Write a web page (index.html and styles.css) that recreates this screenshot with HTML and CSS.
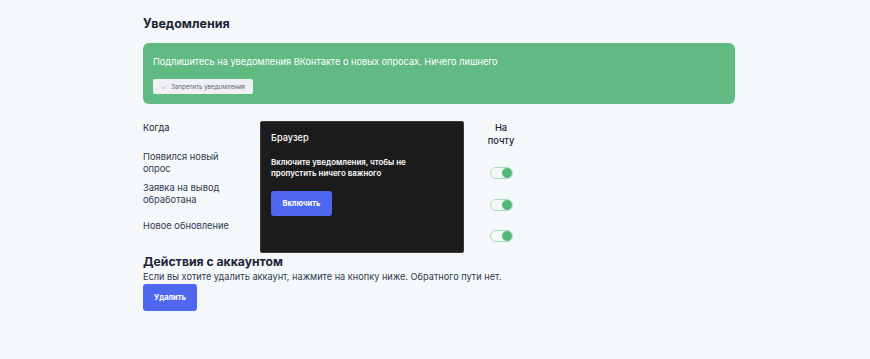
FILE: index.html
```html
<!DOCTYPE html>
<html lang="ru">
    <head>
        <meta charset="UTF-8">
        <meta name="viewport" content="width=device-width, initial-scale=1.0">
        <title>Уведомления</title>
        <link rel="stylesheet" href="styles.css">
    </head>
    <body>
        <div class="page">
            <h2 class="section-title">Уведомления</h2>
            <div class="vk-banner">
                <p>Подлишитесь на уведомления ВКонтакте о новых опросах. Ничего лишнего</p>
                <button class="vk-button">
                    <svg width="8" height="6" viewBox="0 0 8 6"><path d="M1 3.2 L3 5 L7 1" fill="none" stroke="#9aa3ad" stroke-width="1"/></svg>
                    Запретить уведомления
                </button>
            </div>

            <div class="notify-table">
                <div class="row head">
                    <div class="label">Когда</div>
                    <div class="browser-col"></div>
                    <div class="mail-col">На<br>почту</div>
                </div>
                <div class="row r1">
                    <div class="label">Появился новый<br>опрос</div>
                    <div class="browser-col"></div>
                    <div class="mail-col"><span class="toggle on"></span></div>
                </div>
                <div class="row r2">
                    <div class="label">Заявка на вывод<br>обработана</div>
                    <div class="browser-col"></div>
                    <div class="mail-col"><span class="toggle on"></span></div>
                </div>
                <div class="row r3">
                    <div class="label">Новое обновление</div>
                    <div class="browser-col"></div>
                    <div class="mail-col"><span class="toggle on"></span></div>
                </div>

                <div class="browser-popup">
                    <div class="popup-title">Браузер</div>
                    <div class="popup-text">Включите уведомления, чтобы не<br>пропустить ничего важного</div>
                    <button class="btn">Включить</button>
                </div>
            </div>

            <h2 class="section-title account">Действия с аккаунтом</h2>
            <p class="account-text">Если вы хотите удалить аккаунт, нажмите на кнопку ниже. Обратного пути нет.</p>
            <button class="btn delete">Удалить</button>
        </div>
    </body>
</html>
```

FILE: styles.css
```css
body {
    font-family: Inter, "Noto Sans", sans-serif;
    background-color: #f5f8fb;
    color: #1c2536;
    margin: 0;
    padding: 0;
}

.page {
    width: 592px;
    margin-left: 143px;
    padding-top: 16px;
}

.section-title {
    font-size: 12.5px;
    font-weight: 700;
    margin: 0;
    line-height: 16px;
}

.vk-banner {
    box-sizing: border-box;
    margin-top: 11px;
    background-color: #61ba82;
    border-radius: 6px;
    padding: 12px 10px 0;
    height: 61px;
}

.vk-banner p {
    margin: 0;
    color: #fff;
    font-size: 9.2px;
    line-height: 13px;
}

.vk-button {
    margin-top: 11px;
    height: 15px;
    width: 100px;
    border: none;
    border-radius: 2px;
    background-color: #eef0f3;
    color: #5d6470;
    font-family: inherit;
    font-size: 6.2px;
    white-space: nowrap;
    display: flex;
    align-items: center;
    gap: 4px;
    padding: 0 8px;
}

.notify-table {
    position: relative;
    margin-top: 16px;
}

.row {
    display: grid;
    grid-template-columns: 117px 210px 62px;
    font-size: 9.3px;
    line-height: 12px;
    color: #2e3a4f;
}

.row.head {
    height: 30px;
    line-height: 13px;
    padding-top: 1px;
}

.row.head .label {
    color: #1c2536;
}

.row.head .mail-col {
    text-align: center;
    font-weight: 500;
    color: #1c2536;
}

.row.r1 { height: 31px; }
.row.r1 .mail-col { padding-top: 16px; }
.row.r2 { height: 31px; }
.row.r2 .mail-col { padding-top: 17px; }
.row.r3 { height: 30px; }
.row.r3 .label { padding-top: 7px; }
.row.r3 .mail-col { padding-top: 17px; }

.mail-col {
    display: flex;
    justify-content: center;
    align-items: flex-start;
}

.toggle {
    position: relative;
    display: block;
    width: 21px;
    height: 10px;
    border: 1px solid #a9dcbc;
    border-radius: 6px;
    background-color: #f3faf6;
}

.toggle.on::after {
    content: "";
    position: absolute;
    right: 0;
    top: 0;
    width: 10px;
    height: 10px;
    border-radius: 50%;
    background-color: #55b67a;
}

.browser-popup {
    position: absolute;
    left: 117px;
    top: 1px;
    width: 185px;
    height: 121px;
    background-color: #1c1c1c;
    border: 1px solid #3a3a3a;
    border-radius: 2px;
    padding: 9px 7px 0 10px;
    color: #fff;
}

.popup-title {
    font-size: 9.2px;
    line-height: 14px;
    font-weight: 500;
}

.popup-text {
    margin-top: 12px;
    font-size: 7.9px;
    line-height: 11px;
    font-weight: 600;
}

.btn {
    border: none;
    border-radius: 3px;
    background-color: #4f66ee;
    color: #fff;
    font-family: inherit;
    font-weight: 700;
    font-size: 7.5px;
    cursor: pointer;
}

.browser-popup .btn {
    margin-top: 12px;
    width: 61px;
    height: 25px;
}

.section-title.account {
    margin-top: 11px;
    font-size: 12.2px;
    line-height: 16px;
}

.account-text {
    margin: 0;
    font-size: 9.2px;
    line-height: 13px;
    color: #2e3a4f;
}

.btn.delete {
    margin-top: 1px;
    width: 54px;
    height: 27px;
}
```
